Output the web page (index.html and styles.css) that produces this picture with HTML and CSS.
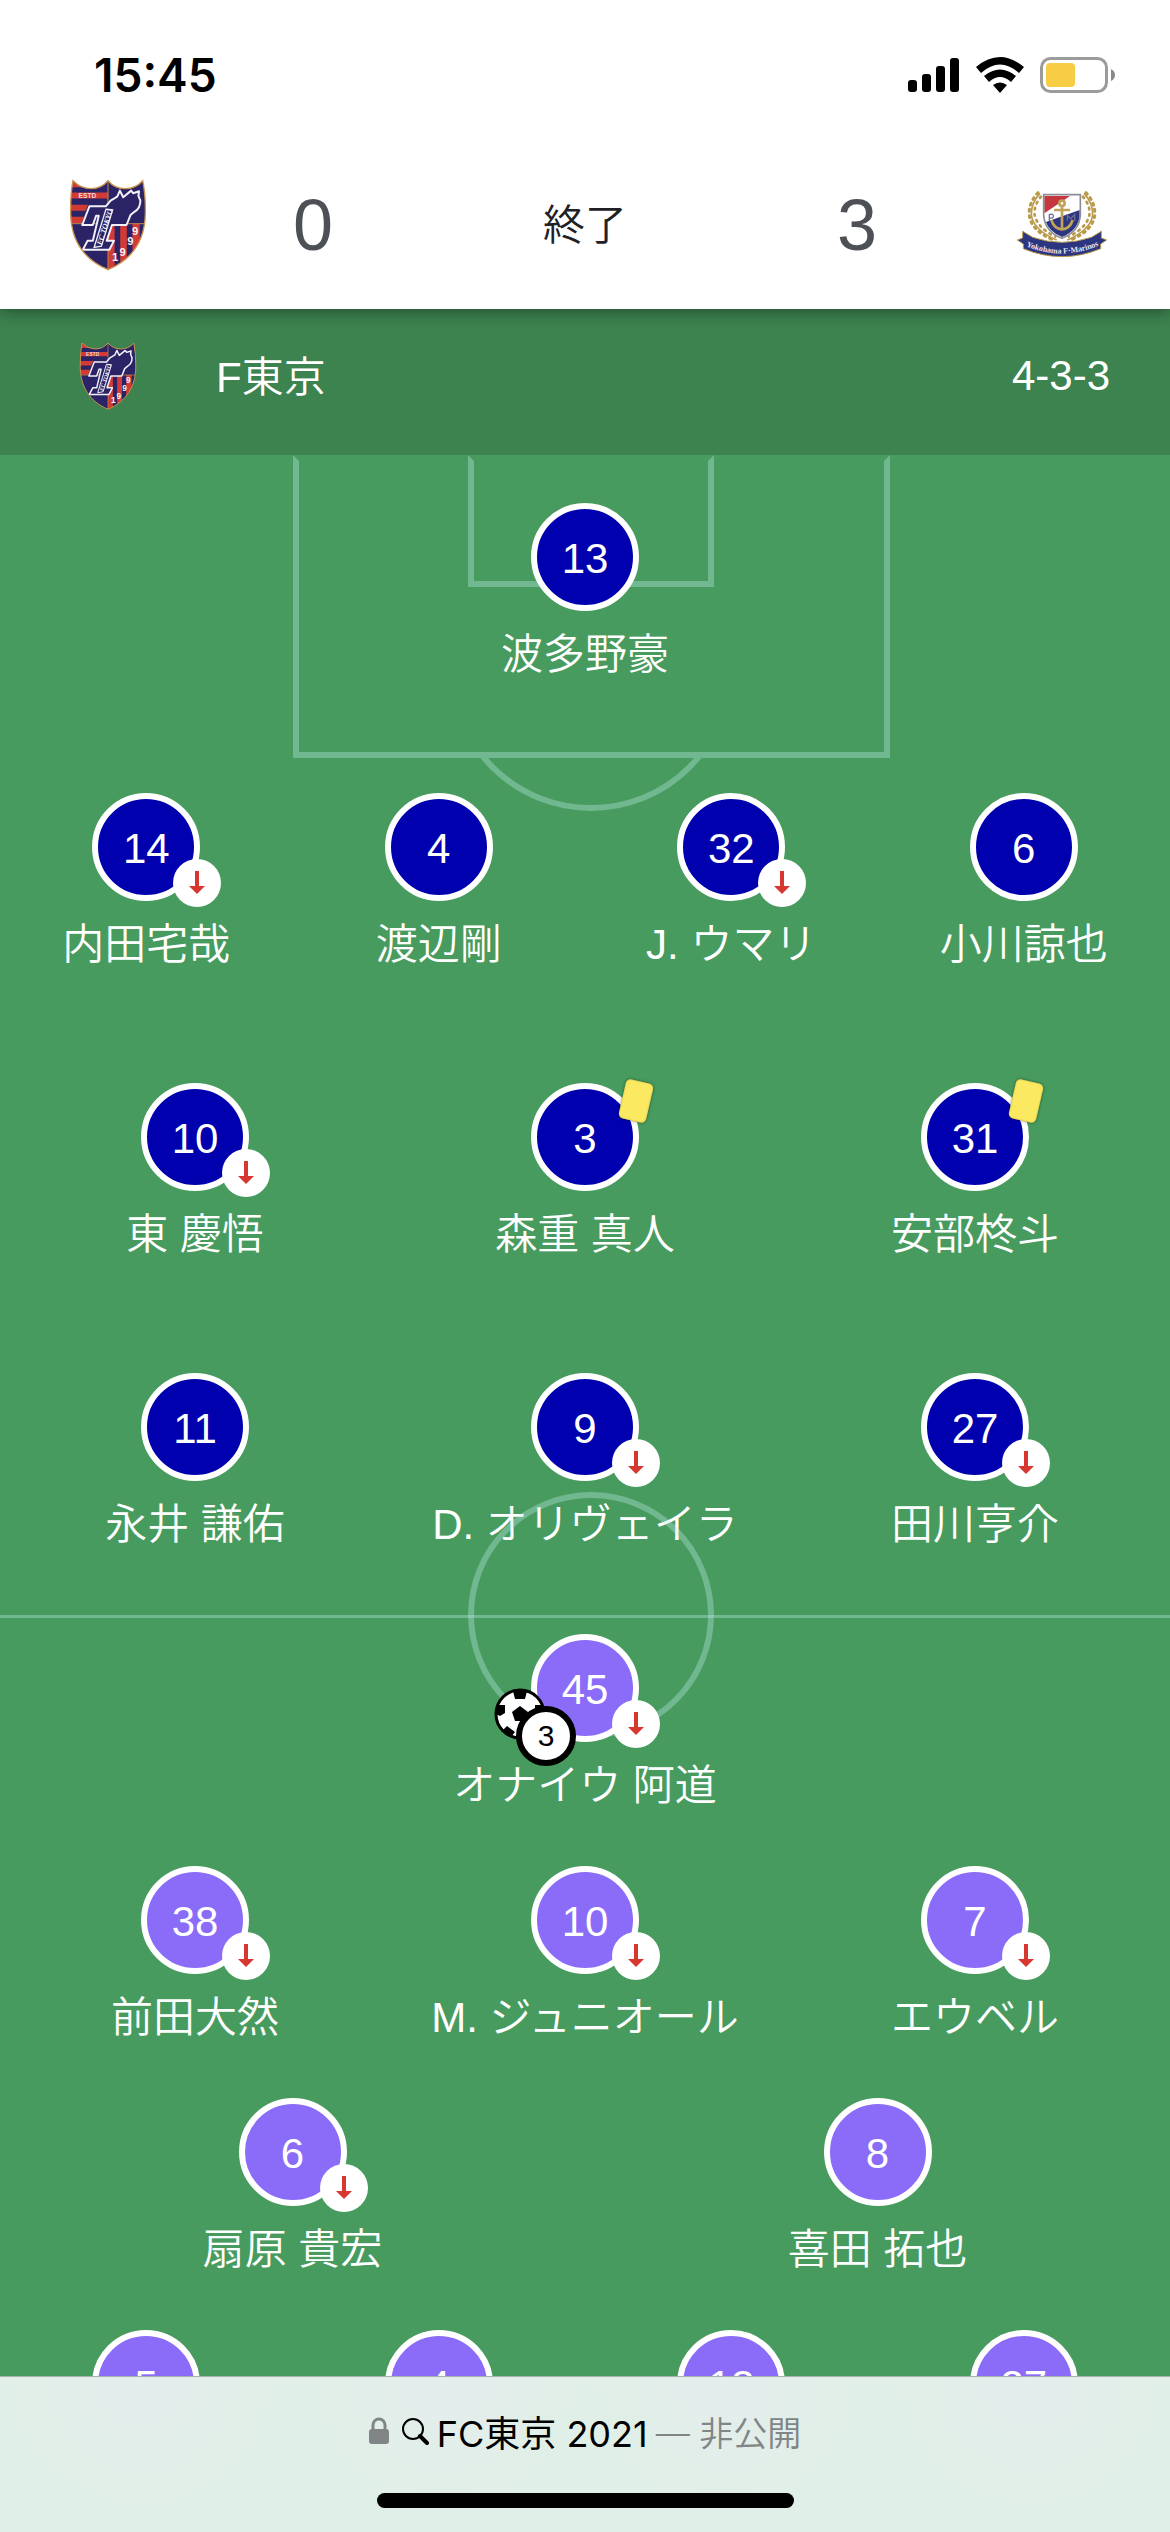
FILE: index.html
```html
<!DOCTYPE html>
<html lang="ja">
<head>
<meta charset="utf-8">
<meta name="viewport" content="width=device-width, initial-scale=1">
<title>FC東京 2021</title>
<link rel="stylesheet" href="styles.css">
</head>
<body>
<svg class="defs" aria-hidden="true">
  <symbol id="crest-tokyo" viewBox="86 58 236 276">
    <clipPath id="tokyo-shield"><path d="M98 62Q122 86 152 86Q184 86 204 62Q224 86 256 86Q288 86 309 62Q318 105 317 160C316 240 278 300 204 331C130 300 92 240 91 160Q90 105 98 62Z"/></clipPath>
    <g clip-path="url(#tokyo-shield)">
      <path fill="#2a2466" d="M86 58h236v276H86z"/>
      <path fill="#d23a35" d="M86 62h70l-10 20H86zM86 98h118v18H86zM86 135h58l-8 18H86zM86 171h46l-8 20H86z"/>
      <path fill="#d23a35" d="M204 192h20v142h-20zM241 192h20v142h-20zM278 192h22v142h-22z"/>
      <path fill="none" stroke="#c08a4a" stroke-width="3" d="M204 60v274M91 192h226"/>
    </g>
    <path fill="#2a2466" stroke="#f2f0f8" stroke-width="6" stroke-linejoin="round" d="M148 139H198L212 122L232 110L240 92L250 112L274 92L280 100L298 94L296 108L302 122Q302 146 284 156L272 166L260 196H216L200 244H222L208 271H128L142 244H158L176 168H168L158 196H126Z"/>
    <path fill="#2a2466" stroke="#f2f0f8" stroke-width="4" d="M198 148L218 150L184 260L162 264Z"/>
    <text class="crest-motto" transform="translate(184 258) rotate(-72)">FC TOKYO</text>
    <text class="crest-estd" x="115" y="114">ESTD</text>
    <text class="crest-year" x="216" y="305">1</text>
    <text class="crest-year" x="239" y="289">9</text>
    <text class="crest-year" x="262" y="258">9</text>
    <text class="crest-year" x="277" y="225">9</text>
    <path fill="none" stroke="#c9924e" stroke-width="4" d="M98 62Q122 86 152 86Q184 86 204 62Q224 86 256 86Q288 86 309 62Q318 105 317 160C316 240 278 300 204 331C130 300 92 240 91 160Q90 105 98 62Z"/>
  </symbol>
  <symbol id="arrow-out" viewBox="0 0 16 24">
    <path fill="#d6372f" d="M6 0h4v15h6l-8 8-8-8h6z"/>
  </symbol>
</svg>

<div class="app">
  <header class="top">
    <div class="status">
      <span class="clock">15:45</span>
      <span class="indicators">
        <svg width="52" height="36" viewBox="0 0 52 36" aria-label="電波"><path d="M0 26a3 3 0 0 1 3-3h3a3 3 0 0 1 3 3v6a3 3 0 0 1-3 3H3a3 3 0 0 1-3-3zM14 20a3 3 0 0 1 3-3h3a3 3 0 0 1 3 3v12a3 3 0 0 1-3 3h-3a3 3 0 0 1-3-3zM28 12a3 3 0 0 1 3-3h3a3 3 0 0 1 3 3v20a3 3 0 0 1-3 3h-3a3 3 0 0 1-3-3zM42 4a3 3 0 0 1 3-3h3a3 3 0 0 1 3 3v28a3 3 0 0 1-3 3h-3a3 3 0 0 1-3-3z"/></svg>
        <svg width="48" height="36" viewBox="0 0 48 36" aria-label="Wi-Fi"><path d="M0 10Q24-10 48 10L43 16Q24-1 5 16ZM8 19Q24 6 40 19L35 25Q24 15 13 25ZM17 28Q24 23 31 28L24 36Z"/></svg>
        <svg width="76" height="36" viewBox="0 0 76 36" aria-label="バッテリー"><rect x="1.500" y="1.500" width="65" height="33" rx="9" fill="none" stroke="#9b9b9b" stroke-width="3"/><rect x="6" y="6" width="29" height="24" rx="4" fill="#f6cd45"/><path fill="#8a8a8a" d="M71 12q4 2 4 6t-4 6z"/></svg>
      </span>
    </div>
    <div class="score">
      <svg class="crest-lg" role="img" aria-label="F東京"><use href="#crest-tokyo"/></svg>
      <span class="goals">0</span>
      <span class="state">終了</span>
      <span class="goals">3</span>
      <svg class="crest-away" viewBox="78 90 276 210" role="img" aria-label="横浜FM">
        <g fill="none" stroke="#b99a4b" stroke-width="5">
          <path d="M150 100Q122 130 124 165Q130 210 200 240M282 100Q310 130 308 165Q302 210 232 240"/>
          <path stroke-width="9" stroke-linecap="round" stroke-dasharray="6 13" d="M144 98Q114 130 118 168Q126 212 186 238M288 98Q318 130 314 168Q306 212 246 238"/>
          <path stroke-width="8" stroke-linecap="round" stroke-dasharray="5 14" d="M153 110Q130 138 134 166Q144 205 196 230M279 110Q302 138 298 166Q288 205 236 230"/>
        </g>
        <path fill="#fff" d="M161 104H271V165Q268 215 216 235Q164 215 161 165Z"/>
        <path fill="#c5363e" d="M163 108H240L163 160Z"/>
        <path fill="#2c3580" d="M269 150V170Q262 212 216 231Q176 214 168 186Z"/>
        <path fill="none" stroke="#8e8b96" stroke-width="5" d="M161 104H271V165Q268 215 216 235Q164 215 161 165Z"/>
        <g fill="none" stroke="#c0a356" stroke-width="8"><circle cx="216" cy="130" r="8"/><path d="M216 138V206M192 150H240M184 180Q192 206 216 208Q240 206 248 180"/></g>
        <path fill="none" stroke="#6d6f8e" stroke-width="4" d="M178 182V164Q192 160 190 170Q188 176 178 174M232 182V166L242 176L254 164V182"/>
        <path fill="#2c3580" stroke="#b99a4b" stroke-width="3" d="M98 214L128 232Q216 262 304 232L334 214V234L350 240L332 252V266Q216 314 100 266V252L82 240L98 234Z"/>
        <path id="ribbon" fill="none" d="M106 258Q216 304 328 256"/>
        <text class="crest-ribbon"><textPath href="#ribbon" startOffset="50%" text-anchor="middle">Yokohama F·Marinos</textPath></text>
      </svg>
    </div>
  </header>

  <main class="lineup">
    <div class="teambar">
      <svg class="crest-sm" aria-hidden="true"><use href="#crest-tokyo"/></svg>
      <h1 class="team-name">F東京</h1>
      <span class="formation">4-3-3</span>
    </div>

    <div class="pitch">
      <div class="markings" aria-hidden="true">
        <div class="line penalty-box"></div>
        <div class="line goal-box"></div>
        <div class="arc"><div class="line arc-circle"></div></div>
      </div>
      <section class="half home">
        <ul class="row">
          <li class="player"><div class="shirt">13</div><div class="name">波多野豪</div></li>
        </ul>
        <ul class="row">
          <li class="player"><div class="shirt">14<span class="out"><svg class="arrow"><use href="#arrow-out"/></svg></span></div><div class="name">内田宅哉</div></li>
          <li class="player"><div class="shirt">4</div><div class="name">渡辺剛</div></li>
          <li class="player"><div class="shirt">32<span class="out"><svg class="arrow"><use href="#arrow-out"/></svg></span></div><div class="name">J. ウマリ</div></li>
          <li class="player"><div class="shirt">6</div><div class="name">小川諒也</div></li>
        </ul>
        <ul class="row">
          <li class="player"><div class="shirt">10<span class="out"><svg class="arrow"><use href="#arrow-out"/></svg></span></div><div class="name">東 慶悟</div></li>
          <li class="player"><div class="shirt">3<span class="card"></span></div><div class="name">森重 真人</div></li>
          <li class="player"><div class="shirt">31<span class="card"></span></div><div class="name">安部柊斗</div></li>
        </ul>
        <ul class="row">
          <li class="player"><div class="shirt">11</div><div class="name">永井 謙佑</div></li>
          <li class="player"><div class="shirt">9<span class="out"><svg class="arrow"><use href="#arrow-out"/></svg></span></div><div class="name">D. オリヴェイラ</div></li>
          <li class="player"><div class="shirt">27<span class="out"><svg class="arrow"><use href="#arrow-out"/></svg></span></div><div class="name">田川亨介</div></li>
        </ul>
      </section>
      <section class="half away">
        <div class="line halfway" aria-hidden="true"></div>
        <div class="line centre-circle" aria-hidden="true"></div>
        <ul class="row">
          <li class="player"><div class="shirt">45
            <svg class="ball" viewBox="0 0 52 52" aria-label="ゴール">
              <circle cx="26" cy="26" r="24" fill="#fff" stroke="#000" stroke-width="3"/>
              <path d="M26 18l8 6-3 9H21l-3-9zM19 3h14l-2 8H21zM4 17l7 0 0 8-5 3-4-2zM48 17l-7 0 0 8 5 3 4-2zM13 38l8 6-4 5-9-6zM39 38l-8 6 4 5 9-6z"/>
            </svg>
            <span class="goal-count">3</span>
            <span class="out"><svg class="arrow"><use href="#arrow-out"/></svg></span></div><div class="name">オナイウ 阿道</div></li>
        </ul>
        <ul class="row">
          <li class="player"><div class="shirt">38<span class="out"><svg class="arrow"><use href="#arrow-out"/></svg></span></div><div class="name">前田大然</div></li>
          <li class="player"><div class="shirt">10<span class="out"><svg class="arrow"><use href="#arrow-out"/></svg></span></div><div class="name">M. ジュニオール</div></li>
          <li class="player"><div class="shirt">7<span class="out"><svg class="arrow"><use href="#arrow-out"/></svg></span></div><div class="name">エウベル</div></li>
        </ul>
        <ul class="row">
          <li class="player"><div class="shirt">6<span class="out"><svg class="arrow"><use href="#arrow-out"/></svg></span></div><div class="name">扇原 貴宏</div></li>
          <li class="player"><div class="shirt">8</div><div class="name">喜田 拓也</div></li>
        </ul>
        <ul class="row">
          <li class="player"><div class="shirt">5</div></li>
          <li class="player"><div class="shirt">4</div></li>
          <li class="player"><div class="shirt">13</div></li>
          <li class="player"><div class="shirt">27</div></li>
        </ul>
      </section>
    </div>
  </main>

  <footer class="toolbar">
    <button class="address" type="button">
      <svg class="lock" width="20" height="28" viewBox="0 0 20 28" aria-hidden="true"><rect y="12" width="20" height="15" rx="3" fill="#818585"/><path d="M4 13V8a6 6 0 0 1 12 0v5" fill="none" stroke="#818585" stroke-width="3"/></svg>
      <svg class="glass" width="28" height="28" viewBox="0 0 28 28" aria-hidden="true"><circle cx="12" cy="12" r="10" fill="none" stroke="#000" stroke-width="2"/><path d="M19 19l7 7" stroke="#000" stroke-width="4" stroke-linecap="round"/></svg>
      <span class="query">FC東京 2021</span>
      <span class="private">— 非公開</span>
    </button>
    <div class="home-indicator"></div>
  </footer>
</div>
</body>
</html>
```
FILE: styles.css
```css
* { box-sizing: border-box; }

body {
  margin: 0;
  font-family: "Liberation Sans", "Noto Sans CJK JP", sans-serif;
  font-size: 42px;
  font-weight: 350;
  color: #fff;
  background: #479b5e;
}

ul { list-style: none; margin: 0; padding: 0; }

.defs { position: absolute; width: 0; height: 0; }

.app {
  display: flex;
  flex-direction: column;
  height: 100vh;
  overflow: hidden;
}

/* Status bar and score */
.top {
  position: relative;
  z-index: 2;
  flex: none;
  background: #fff;
  box-shadow: 0 2px 16px rgba(0, 0, 0, 0.45);
}

.status {
  display: flex;
  align-items: center;
  justify-content: space-between;
  height: 141px;
  padding: 8px 54px 0 94px;
  color: #000;
}

.clock {
  font-family: Inter, sans-serif;
  font-size: 46px;
  font-weight: 600;
}

.indicators { display: flex; align-items: center; gap: 16px; }

.score {
  display: grid;
  grid-template-columns: 216px 194px 1fr 194px 216px;
  align-items: center;
  justify-items: center;
  height: 168px;
  color: #202124;
}

.goals { font-size: 72px; color: #4d5156; }
.state { padding-bottom: 8px; }

.crest-lg { width: 78px; height: 92px; }
.crest-sm { width: 58px; height: 68px; justify-self: center; }
.crest-away { width: 92px; height: 70px; }

.crest-motto { font: bold italic 23px "Liberation Serif", serif; fill: #f2f0f8; }
.crest-estd { font: bold 20px "Liberation Sans", sans-serif; fill: #f2d9dc; }
.crest-year { font: bold 34px "Liberation Sans", sans-serif; fill: #f4f1f8; }
.crest-ribbon { font: bold 24px "Liberation Serif", serif; fill: #e8e8f4; }

/* Team bar */
.lineup { flex: 1; min-height: 0; overflow: hidden; }

.teambar {
  display: grid;
  grid-template-columns: 216px 1fr auto;
  align-items: center;
  height: 146px;
  padding: 0 60px 12px 0;
  background: #3d834f;
}

.team-name { margin: 0; padding-bottom: 6px; font-size: 42px; font-weight: 350; }

/* Pitch */
.pitch { position: relative; background: #479b5e; }

.line { border: 6px solid rgba(191, 235, 234, 0.35); }

.penalty-box,
.goal-box {
  position: absolute;
  top: 0;
  box-sizing: content-box;
  border-top-color: transparent;
}

.penalty-box { left: 25%; width: 50%; height: 291px; }
.goal-box { left: 40%; width: 20%; height: 120px; }

.arc {
  position: absolute;
  top: 303px;
  left: 25%;
  display: flex;
  justify-content: center;
  align-items: flex-end;
  width: 51%;
  height: 53px;
  overflow: hidden;
}

.arc-circle { flex: none; width: 284px; height: 284px; border-radius: 50%; }

.half { position: relative; }

.halfway {
  position: absolute;
  top: 0;
  left: 0;
  right: 0;
  border-width: 3px 0 0;
}

.centre-circle {
  position: absolute;
  top: 0;
  left: 40%;
  box-sizing: content-box;
  width: 20%;
  aspect-ratio: 1;
  border-radius: 50%;
  transform: translateY(-50%);
}

.row {
  position: relative;
  display: flex;
  align-items: center;
  justify-content: space-around;
}

.home .row { height: 290px; }
.away .row { height: 232px; }

.player {
  flex: 1;
  display: flex;
  flex-direction: column;
  align-items: center;
  gap: 16px;
  height: 194px;
}

.shirt {
  position: relative;
  display: flex;
  align-items: center;
  justify-content: center;
  width: 108px;
  height: 108px;
  padding-top: 4px;
  border: 6px solid #fff;
  border-radius: 50%;
}

.home .shirt { background: #0000ae; }
.away .shirt { background: #8b6cf8; }

.name { line-height: 56px; white-space: nowrap; }

.out {
  position: absolute;
  left: 75px;
  top: 60px;
  display: flex;
  align-items: center;
  justify-content: center;
  width: 48px;
  height: 48px;
  border-radius: 50%;
  background: #fff;
}

.arrow { width: 16px; height: 24px; }

.card {
  position: absolute;
  left: 85px;
  top: -8px;
  width: 28px;
  height: 40px;
  border-radius: 5px;
  background: #fbea61;
  box-shadow: 0 0 3px rgba(0, 0, 0, 0.5), inset 0 0 2px #c9b23a;
  transform: rotate(13deg);
}

.ball {
  position: absolute;
  left: -43px;
  top: 48px;
  width: 52px;
  height: 52px;
}

.goal-count {
  position: absolute;
  left: -21px;
  top: 66px;
  display: flex;
  align-items: center;
  justify-content: center;
  width: 60px;
  height: 60px;
  border: 6px solid #000;
  border-radius: 50%;
  background: #fff;
  color: #000;
  font-size: 30px;
}

/* Browser toolbar */
.toolbar {
  position: relative;
  z-index: 2;
  flex: none;
  display: flex;
  flex-direction: column;
  align-items: center;
  justify-content: space-between;
  height: 156px;
  padding: 28px 0 24px;
  border-top: 1px solid #a9b3ae;
  background:
    radial-gradient(circle at 12% 0, #e5edee, transparent 130px),
    radial-gradient(circle at 38% 0, #e5edee, transparent 130px),
    radial-gradient(circle at 62% 0, #e5edee, transparent 130px),
    radial-gradient(circle at 88% 0, #e5edee, transparent 130px),
    #e0efe7;
}

.address {
  display: flex;
  align-items: center;
  gap: 8px;
  height: 52px;
  padding: 0;
  border: 0;
  background: none;
  font-family: Inter, "Noto Sans CJK JP", sans-serif;
  font-size: 34px;
  font-weight: 400;
  color: #000;
}

.lock { margin-right: 4px; }

.query { font-size: 36px; }

.private { font-weight: 350; color: #818585; }

.home-indicator {
  width: 417px;
  height: 15px;
  border-radius: 8px;
  background: #000;
}
```
